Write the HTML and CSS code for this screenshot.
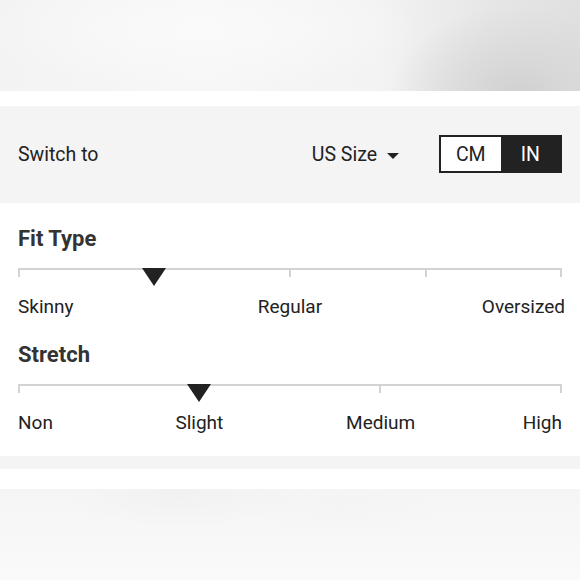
FILE: index.html
```html
<!DOCTYPE html>
<html>
<head>
<meta charset="utf-8">
<link rel="stylesheet" href="styles.css">
</head>
<body>
<div class="hero"></div>
<div class="gap-white"></div>
<div class="switch-bar">
  <span class="switch-label">Switch to</span>
  <div class="switch-right">
    <span class="size-select">US Size <span class="caret"></span></span>
    <div class="toggle">
      <span class="opt">CM</span>
      <span class="opt active">IN</span>
    </div>
  </div>
</div>
<div class="fit-panel">
  <div class="fit-block">
    <h2 class="fit-title">Fit Type</h2>
    <div class="scale">
      <div class="seg"></div><div class="seg"></div><div class="seg"></div><div class="seg last"></div>
      <span class="marker" style="left:25%"></span>
    </div>
    <div class="labels four">
      <span class="l-start">Skinny</span>
      <span class="l-mid span2">Regular</span>
      <span class="l-end overhang">Oversized</span>
    </div>
  </div>
  <div class="fit-block">
    <h2 class="fit-title">Stretch</h2>
    <div class="scale">
      <div class="seg"></div><div class="seg"></div><div class="seg last"></div>
      <span class="marker" style="left:33.333%"></span>
    </div>
    <div class="labels six">
      <span class="l-start">Non</span>
      <span class="l-mid span2">Slight</span>
      <span class="l-mid span2">Medium</span>
      <span class="l-end">High</span>
    </div>
  </div>
</div>
<div class="gray-band"></div>
<div class="gap-white2"></div>
<div class="bottom-img"></div>
</body>
</html>
```
FILE: styles.css
```css
* { box-sizing: border-box; }
html, body { margin: 0; padding: 0; background: #fff; }
body { font-family: Roboto, "Liberation Sans", sans-serif; color: #222; width: 580px; overflow: hidden; }

.hero {
  height: 91px;
  background:
    radial-gradient(ellipse 130px 90px at 520px 95px, rgba(208,208,208,1) 0%, rgba(214,214,214,0.85) 35%, rgba(230,230,230,0) 100%),
    radial-gradient(ellipse 220px 60px at 200px 30px, rgba(250,250,250,1), rgba(250,250,250,0)),
    linear-gradient(90deg, #f3f3f3 0%, #f7f7f7 35%, #f3f3f3 65%, #e6e6e6 85%, #e0e0e0 100%);
}
.gap-white { height: 15px; }

.switch-bar {
  height: 97px;
  background: #f4f4f4;
  display: flex;
  align-items: center;
  justify-content: space-between;
  padding: 0 18px 0 18px;
}
.switch-label { font-size: 19.5px; }
.switch-right { display: flex; align-items: center; gap: 40px; }
.size-select { font-size: 19.5px; display: flex; align-items: center; gap: 10px; }
.caret {
  width: 0; height: 0;
  border-left: 6px solid transparent;
  border-right: 6px solid transparent;
  border-top: 6px solid #222;
  margin-top: 2px;
}
.toggle {
  display: flex;
  border: 2px solid #222;
  height: 38px;
  width: 123px;
  margin-top: -1px;
}
.opt {
  flex: 1;
  display: flex;
  align-items: center;
  justify-content: center;
  font-size: 19.5px;
  background: #fff;
  color: #222;
}
.opt.active { background: #222; color: #fff; }

.fit-panel { padding: 23px 18px 22px 18px; }
.fit-block + .fit-block { margin-top: 24px; }
.fit-title { margin: 0; font-size: 22px; line-height: 26px; font-weight: 700; color: #333; }
.scale {
  position: relative;
  display: flex;
  height: 9px;
  margin-top: 16px;
}
.seg {
  flex: 1;
  border-top: 2px solid #d3d3d3;
  border-left: 2px solid #d3d3d3;
}
.seg.last { border-right: 2px solid #d3d3d3; }
.marker {
  position: absolute;
  top: 0;
  margin-left: -12px;
  width: 0; height: 0;
  border-left: 12px solid transparent;
  border-right: 12px solid transparent;
  border-top: 18px solid #222;
}
.labels {
  display: grid;
  margin-top: 19px;
  font-size: 19px;
  line-height: 22px;
}
.labels.four { grid-template-columns: repeat(4, 1fr); }
.labels.six { grid-template-columns: repeat(6, 1fr); }
.labels span { white-space: nowrap; }
.span2 { grid-column: span 2; }
.l-start { justify-self: start; }
.l-mid { justify-self: center; }
.l-end { justify-self: end; }
.overhang { margin-right: -3px; }

.gray-band { height: 13px; background: #f4f4f4; }
.gap-white2 { height: 20px; }
.bottom-img {
  height: 91px;
  background:
    radial-gradient(ellipse 120px 40px at 180px 0px, rgba(241,241,241,1), rgba(241,241,241,0)),
    radial-gradient(ellipse 100px 40px at 340px 10px, rgba(244,244,244,1), rgba(244,244,244,0)),
    linear-gradient(180deg, #f5f5f5 0%, #f8f8f8 60%, #fafafa 100%);
}
```
